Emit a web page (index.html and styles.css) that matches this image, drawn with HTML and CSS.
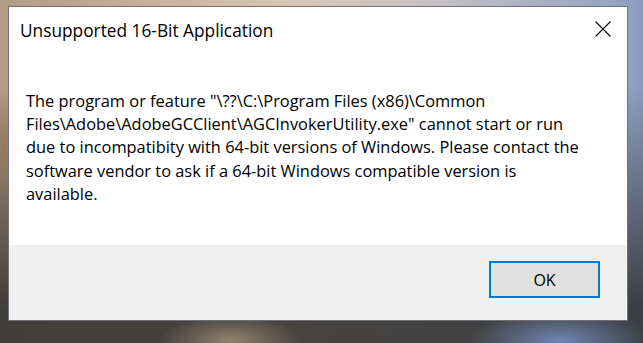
FILE: index.html
```html
<!DOCTYPE html>
<html>
<head>
<meta charset="utf-8">
<link rel="stylesheet" href="styles.css">
</head>
<body>
<div class="desktop">
  <div class="dialog">
    <div class="titlebar">
      <span class="title">Unsupported 16-Bit Application</span>
      <span class="close" aria-label="Close">
        <svg width="16" height="16" viewBox="0 0 16 16"><path d="M0.5 0.5 L15.5 15.5 M15.5 0.5 L0.5 15.5" stroke="#000" stroke-width="1.1" fill="none"/></svg>
      </span>
    </div>
    <div class="content">
      <p class="message">The program or feature "\??\C:\Program Files (x86)\Common<br>Files\Adobe\AdobeGCClient\AGCInvokerUtility.exe" cannot start or run<br>due to incompatibity with 64-bit versions of Windows. Please contact the<br>software vendor to ask if a 64-bit Windows compatible version is<br>available.</p>
    </div>
    <div class="footer">
      <button class="ok">OK</button>
    </div>
  </div>
</div>
</body>
</html>
```
FILE: styles.css
```css
html, body {
  margin: 0;
  padding: 0;
}
body {
  width: 643px;
  height: 343px;
  overflow: hidden;
  font-family: "Open Sans", "Noto Sans", sans-serif;
}
.desktop {
  width: 643px;
  height: 343px;
  padding: 6px 0 0 8px;
  box-sizing: border-box;
  background:
    radial-gradient(ellipse 70px 25px at 230px 340px, rgba(170,150,120,0.75), transparent),
    radial-gradient(ellipse 90px 30px at 560px 340px, rgba(120,150,200,0.8), transparent),
    radial-gradient(ellipse 12px 50px at 4px 150px, rgba(150,120,90,0.8), transparent),
    linear-gradient(to bottom, rgba(0,0,0,0) 0%, rgba(0,0,0,0) 25%, rgba(45,45,45,0.85) 90%),
    linear-gradient(to right, #b39a84 0%, #d8c6b4 45%, #c9c3c4 65%, #94a3c2 96%, #8a9cbe 100%);
}
.dialog {
  width: 620px;
  height: 315px;
  box-sizing: border-box;
  border: 1px solid #6f7078;
  background: #ffffff;
  display: flex;
  flex-direction: column;
}
.titlebar {
  height: 44px;
  display: flex;
  align-items: flex-start;
  justify-content: space-between;
  padding: 0 16px 0 11px;
}
.title {
  font-size: 17.3px;
  color: #000;
  margin-top: 12px;
}
.close {
  margin-top: 14px;
  width: 16px;
  height: 16px;
}
.close svg {
  display: block;
}
.content {
  flex: 1;
  padding: 0 0 0 17px;
}
.message {
  margin: 38px 0 0 0;
  font-size: 16.4px;
  line-height: 23.2px;
  color: #000;
}
.footer {
  height: 75px;
  background: #f0f0f0;
  display: flex;
  justify-content: flex-end;
  align-items: flex-start;
  padding: 16px 27px 0 0;
  box-sizing: border-box;
}
.ok {
  width: 111px;
  height: 37px;
  border: 2px solid #0078d7;
  background: #e1e1e1;
  font-family: "Open Sans", "Noto Sans", sans-serif;
  font-size: 16px;
  color: #000;
  padding: 0;
  margin: 0;
}
```
